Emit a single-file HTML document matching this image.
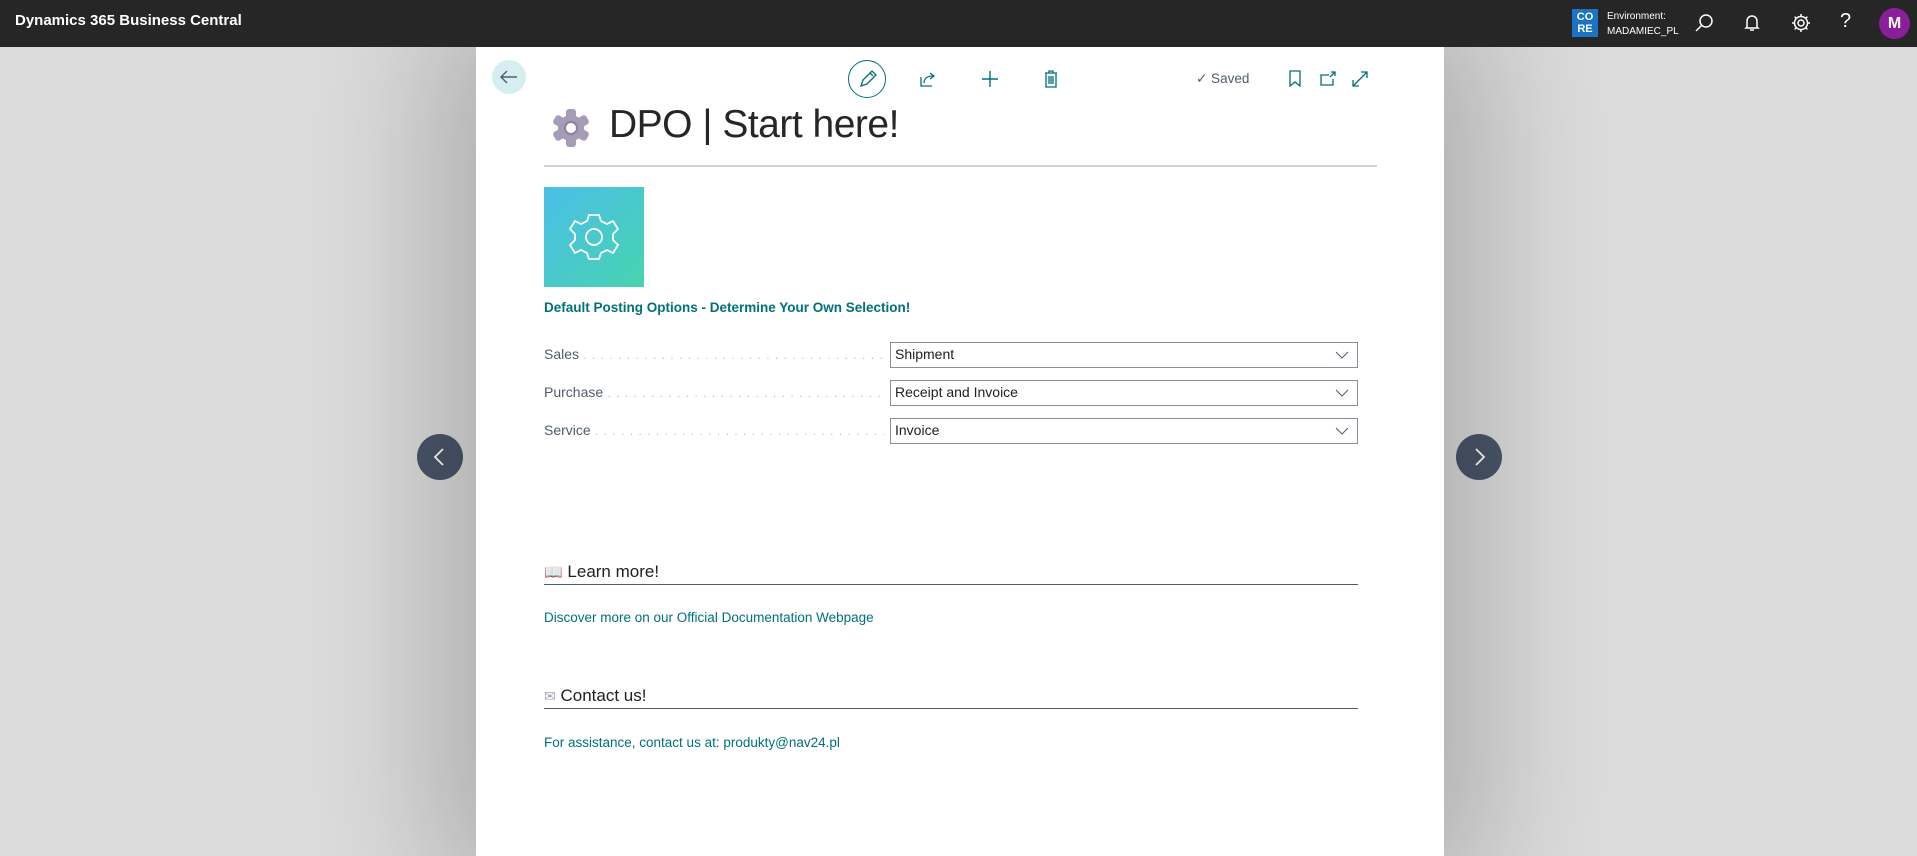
<!DOCTYPE html>
<html><head><meta charset="utf-8"><style>
*{margin:0;padding:0;box-sizing:border-box}
body{width:1917px;height:856px;overflow:hidden;font-family:"Segoe UI","Liberation Sans",sans-serif;background:#dcdcdc;position:relative}
.top{position:absolute;left:0;top:0;width:1917px;height:47px;background:#262626;color:#fff;z-index:2}
.abs{position:absolute}
.panel{position:absolute;left:476px;top:47px;width:968px;height:809px;background:#fff;box-shadow:0 0 160px 40px rgba(0,0,0,.22)}
.lbl{position:absolute;left:544px;font-size:14px;color:#505c6d;width:340px;overflow:hidden;white-space:nowrap}
.lbl:after{content:" . . . . . . . . . . . . . . . . . . . . . . . . . . . . . . . . . . . . . . . . . . . . . . . . . . . . . . . . . . . . . . . . . . . .";color:#b0b4ba;font-size:11px;letter-spacing:1.3px}
.box{position:absolute;left:890px;width:468px;height:26px;border:1px solid #8a8f99;font-size:14px;color:#212121;padding:3px 4px}
.box svg{position:absolute;right:8px;top:8px}
.h{position:absolute;left:544px;width:814px;border-bottom:1.5px solid #505c6d;font-size:17px;color:#212121;height:23px}
.link{position:absolute;left:544px;font-size:13.5px;color:#00707a}
.circ{position:absolute;width:46px;height:46px;border-radius:50%;background:#4a5669}
</style></head><body>
<div class="top">
<div class="abs" style="left:15px;top:12px;font-size:15px;font-weight:bold">Dynamics 365 Business Central</div>
<div class="abs" style="left:1572px;top:9px;width:26px;height:28px;background:#1a73c4;font-size:11px;font-weight:bold;line-height:12px;text-align:center;padding-top:2px">CO<br>RE</div>
<div class="abs" style="left:1607px;top:9px;font-size:10px;line-height:15px">Environment:<br>MADAMIEC_PL</div>
<svg class="abs" style="left:1693px;top:12px" width="22" height="22" viewBox="0 0 22 22" fill="none" stroke="#fff" stroke-width="1.5"><circle cx="13" cy="9" r="6"/><path d="M9 13 3 19"/></svg>
<svg class="abs" style="left:1743px;top:12px" width="18" height="22" viewBox="0 0 18 22" fill="none" stroke="#fff" stroke-width="1.5"><path d="M4 15V9a5 5 0 0 1 10 0v6l1 1H3z M7 18h4"/></svg>
<svg class="abs" style="left:1790px;top:12px" width="22" height="22" viewBox="0 0 22 22" fill="none" stroke="#fff" stroke-width="1.5"><circle cx="11" cy="11" r="3"/><path d="M11 2v3M11 17v3M2 11h3M17 11h3M4.6 4.6l2.1 2.1M15.3 15.3l2.1 2.1M4.6 17.4l2.1-2.1M15.3 6.7l2.1-2.1"/><circle cx="11" cy="11" r="6.5"/></svg>
<div class="abs" style="left:1840px;top:10px;font-size:20px">?</div>
<div class="abs" style="left:1879px;top:8px;width:31px;height:31px;border-radius:50%;background:#8b1f99;font-weight:bold;font-size:16px;text-align:center;line-height:31px">M</div>
</div>
<div class="circ" style="left:417px;top:434px"><svg width="46" height="46"><path d="M26 15 18 23 26 31" fill="none" stroke="#fff" stroke-width="1.8"/></svg></div>
<div class="circ" style="left:1456px;top:434px"><svg width="46" height="46"><path d="M20 15 28 23 20 31" fill="none" stroke="#fff" stroke-width="1.8"/></svg></div>
<div class="panel"></div>
<div class="abs" style="left:492px;top:60px;width:34px;height:34px;border-radius:50%;background:#d6eef0"><svg width="34" height="34"><path d="M25 17H10M15 11 9 17l6 6" fill="none" stroke="#505c6d" stroke-width="1.4"/></svg></div>
<div class="abs" style="left:848px;top:60px;width:38px;height:38px;border-radius:50%;border:1.5px solid #00707a"><svg width="36" height="36"><path d="M12 25l2-6 9-9 4 4-9 9z M21 12l3 3" fill="none" stroke="#00707a" stroke-width="1.3"/></svg></div>
<svg class="abs" style="left:918px;top:69px" width="20" height="20" fill="none" stroke="#00707a" stroke-width="1.3"><path d="M3 8v9h11M6 14c0-5 4-7 9-7M12 4l4 3-4 3"/></svg>
<svg class="abs" style="left:980px;top:69px" width="20" height="20" fill="none" stroke="#00707a" stroke-width="1.4"><path d="M10 2v16M2 10h16"/></svg>
<svg class="abs" style="left:1042px;top:69px" width="18" height="20" fill="none" stroke="#00707a" stroke-width="1.3"><path d="M3 4h12M7 4V2h4v2M4 4v14h10V4M7 7v8M9 7v8M11 7v8"/></svg>
<div class="abs" style="left:1196px;top:71px;font-size:13.5px;color:#505c6d">✓ Saved</div>
<svg class="abs" style="left:1288px;top:69px" width="14" height="20" fill="none" stroke="#00707a" stroke-width="1.3"><path d="M2 2h10v15l-5-4-5 4z"/></svg>
<svg class="abs" style="left:1318px;top:69px" width="20" height="20" fill="none" stroke="#00707a" stroke-width="1.3"><path d="M11 6H3v10h12v-6M13 3h4v4M17 3l-5 5"/></svg>
<svg class="abs" style="left:1350px;top:69px" width="20" height="20" fill="none" stroke="#00707a" stroke-width="1.3"><path d="M3 17 17 3M11 3h6v6M3 11v6h6"/></svg>
<svg class="abs" style="left:550px;top:107px" width="42" height="42" viewBox="0 0 42 42"><g fill="#a49db5"><circle cx="21" cy="21" r="13"/><rect x="16" y="2" width="10" height="38" rx="3"/><rect x="16" y="2" width="10" height="38" rx="3" transform="rotate(60 21 21)"/><rect x="16" y="2" width="10" height="38" rx="3" transform="rotate(120 21 21)"/></g><circle cx="21" cy="21" r="6" fill="#fff"/><circle cx="21" cy="21" r="6" fill="none" stroke="#8b84a0" stroke-width="2"/></svg>
<div class="abs" style="left:609px;top:103px;font-size:39px;font-weight:300;color:#262626;font-family:'Segoe UI Light','Liberation Sans',sans-serif;letter-spacing:-0.5px">DPO | Start here!</div>
<div class="abs" style="left:544px;top:165px;width:833px;height:2px;background:#d2d3d7"></div>
<div class="abs" style="left:544px;top:187px;width:100px;height:100px;background:linear-gradient(135deg,#4bbfe8,#47d3b0)"><svg width="100" height="100" viewBox="0 0 100 100" fill="none" stroke="#fff" stroke-width="1.8"><circle cx="50" cy="50" r="8"/><path d="M45 28h10l2 6 6 3 6-3 5 8-5 5v6l5 5-5 8-6-3-6 3-2 6H45l-2-6-6-3-6 3-5-8 5-5v-6l-5-5 5-8 6 3 6-3z"/></svg></div>
<div class="abs" style="left:544px;top:300px;font-size:13.5px;font-weight:bold;color:#00707a">Default Posting Options - Determine Your Own Selection!</div>
<div class="lbl" style="top:346px">Sales</div>
<div class="lbl" style="top:384px">Purchase</div>
<div class="lbl" style="top:422px">Service</div>
<div class="box" style="top:342px">Shipment<svg width="14" height="9"><path d="M1 1l6 6 6-6" fill="none" stroke="#505c6d"/></svg></div>
<div class="box" style="top:380px">Receipt and Invoice<svg width="14" height="9"><path d="M1 1l6 6 6-6" fill="none" stroke="#505c6d"/></svg></div>
<div class="box" style="top:418px">Invoice<svg width="14" height="9"><path d="M1 1l6 6 6-6" fill="none" stroke="#505c6d"/></svg></div>
<div class="h" style="top:562px"><span style="font-size:15px;color:#3a8ad0">📖</span> Learn more!</div>
<div class="link" style="top:610px">Discover more on our Official Documentation Webpage</div>
<div class="h" style="top:686px"><span style="font-size:14px;color:#a49db5">✉</span> Contact us!</div>
<div class="link" style="top:735px">For assistance, contact us at: produkty@nav24.pl</div>
</body></html>
